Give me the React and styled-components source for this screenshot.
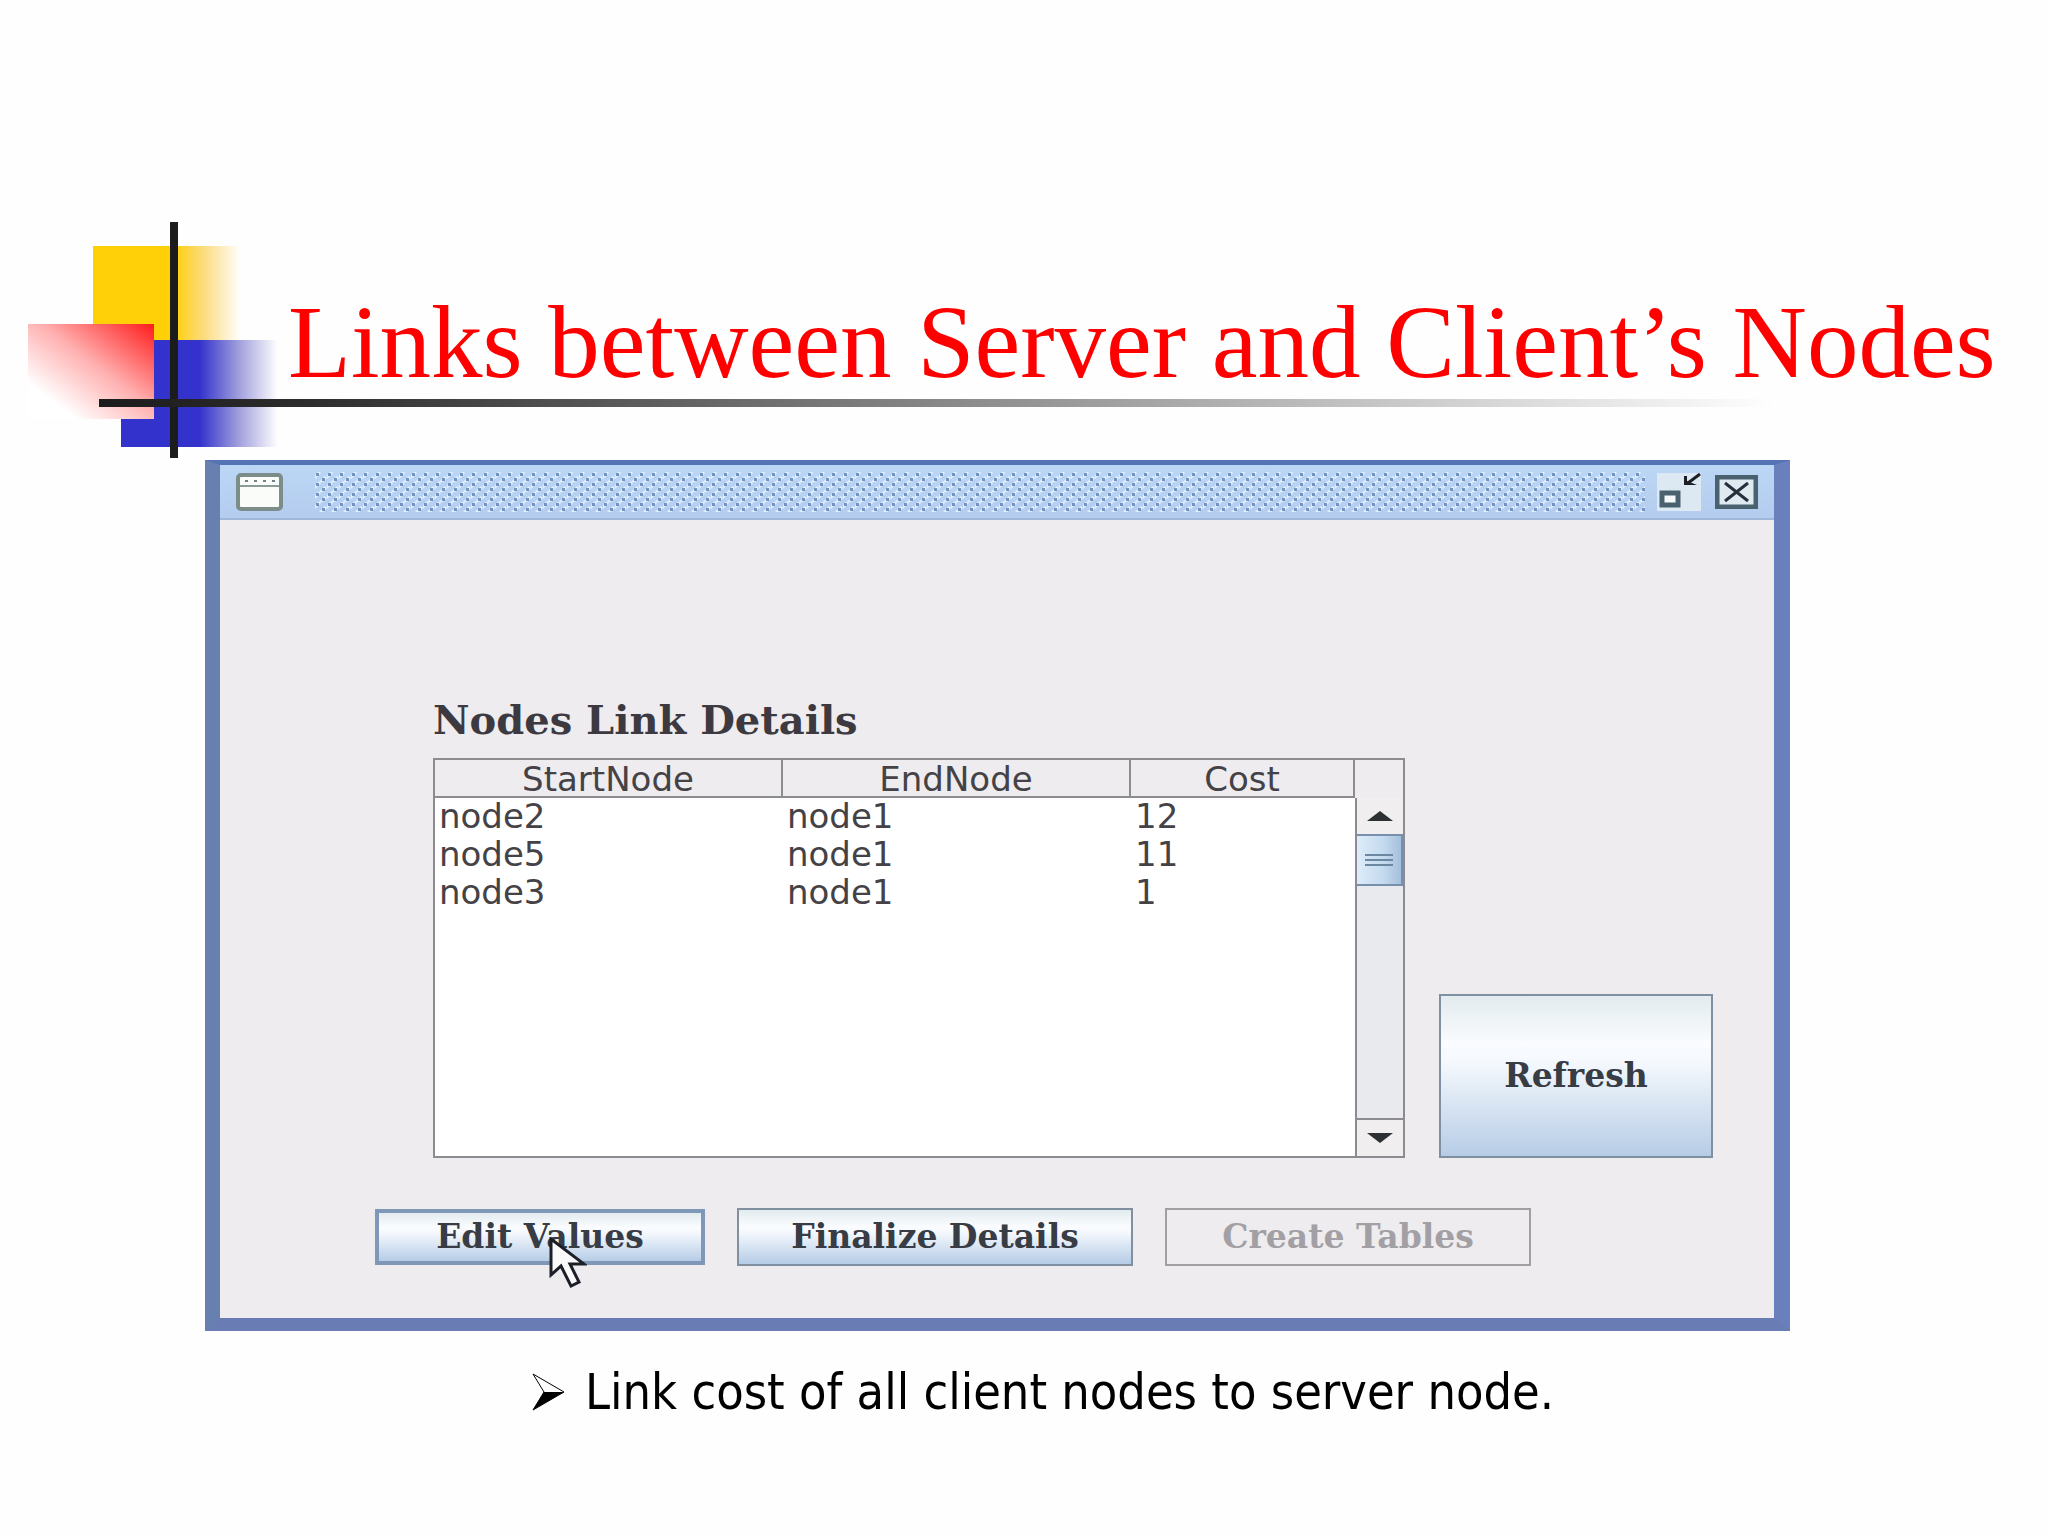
import React from "react";
import styled, { createGlobalStyle } from "styled-components";

const serif = `"DejaVu Serif", serif`;
const sans = `"DejaVu Sans", sans-serif`;

const GlobalStyle = createGlobalStyle`
  *, *::before, *::after { box-sizing: border-box; }
  body { margin: 0; background: #fefefe; }
`;

const Slide = styled.main`
  display: flex;
  flex-direction: column;
  padding-top: 222px;
`;

const Header = styled.header`
  display: grid;
  > * { grid-area: 1 / 1; }
`;

const Ornament = styled.svg`
  display: block;
  width: 100%;
  height: 238px;
`;

const Title = styled.h1`
  margin: 0;
  padding: 64px 0 0 288px;
  font: 400 103px/112px "Liberation Serif", serif;
  color: #ff0000;
  white-space: nowrap;
`;

const Frame = styled.section`
  margin: 0 258px 0 205px;
  border-style: solid;
  border-width: 5px 16px 13px 15px;
  border-color: #5474b4 #6a80bc #6a7cb4 #6880b0;
  background: #eeecee;
`;

const TitleBar = styled.div`
  display: flex;
  align-items: center;
  gap: 12px;
  height: 55px;
  padding: 0 16px;
  background: linear-gradient(#bcd6f6, #b4cdee);
  border-bottom: 2px solid #9db8d8;
`;

const Grip = styled.svg`
  flex: 1;
  height: 40px;
  margin-left: 20px;
`;

const IconButton = styled.button`
  display: block;
  padding: 0;
  border: 0;
  background: none;
  line-height: 0;
`;

const Content = styled.div`
  display: flex;
  flex-direction: column;
  gap: 50px;
  padding: 178px 61px 52px 155px;
`;

const Details = styled.div`
  display: flex;
  align-items: flex-end;
  gap: 34px;
  padding-left: 58px;
`;

const TableBlock = styled.div`
  flex: 1;
  min-width: 0;
`;

const Heading = styled.h2`
  margin: 0 0 16px;
  font: 700 40px/44px ${serif};
  color: #3c3a40;
  white-space: nowrap;
`;

const Panel = styled.div`
  display: flex;
  min-height: 400px;
  border: 2px solid #8c8c90;
  background: #fff;
`;

const TableArea = styled.div`
  flex: 1;
`;

const Table = styled.table`
  width: 100%;
  border-collapse: separate;
  border-spacing: 0;
  table-layout: fixed;
  font: 400 34px/38px ${sans};
  color: #444246;
`;

const HeadCell = styled.th`
  width: ${(p) => p.$width || "auto"};
  padding: 2px 0 0;
  font-weight: 400;
  line-height: 34px;
  background: #eeecee;
  border-right: 2px solid #8c8c90;
  border-bottom: 2px solid #8c8c90;
`;

const Cell = styled.td`
  padding: 0 0 0 4px;
  line-height: 36px;
  padding-bottom: 2px;
`;

const ScrollColumn = styled.div`
  display: flex;
  flex-direction: column;
  width: 48px;
  background: #eeecee;
`;

const Corner = styled.div`
  height: 38px;
`;

const ScrollBar = styled.div`
  flex: 1;
  display: flex;
  flex-direction: column;
  border-left: 2px solid #8c8c90;
  background: #e8eaee;
`;

const ScrollButton = styled.button`
  display: grid;
  place-items: center;
  height: ${(p) => (p.$end ? 38 : 36)}px;
  padding: 0;
  border: 0;
  border-top: ${(p) => (p.$end ? "2px solid #8c8c90" : "0")};
  background: #f0eeee;
`;

const Thumb = styled.div`
  display: grid;
  place-items: center;
  height: 52px;
  border: 2px solid #7890ac;
  border-left: 0;
  background: linear-gradient(90deg, #dcecfa, #c4daee 60%, #a4c0dc);
`;

const Track = styled.div`
  flex: 1;
`;

const SwingButton = styled.button`
  width: ${(p) => p.$width}px;
  height: ${(p) => p.$height}px;
  padding: 0;
  border: ${(p) => (p.$focused ? "4px solid #8098b8" : "2px solid #8090a0")};
  background: linear-gradient(#e2ebee, #fafcff 30%, #f4f8fd 42%, #b6cce6);
  font: 700 33px/36px ${serif};
  color: #383c44;
  white-space: nowrap;
  &:disabled {
    border-color: #a0a0a2;
    background: #eeecee;
    color: #a2a0a4;
  }
`;

const Actions = styled.div`
  display: flex;
  align-items: center;
  gap: 32px;
`;

const Anchor = styled.div`
  position: relative;
  display: flex;
`;

const Pointer = styled.svg`
  position: absolute;
  left: 174px;
  top: 28px;
  pointer-events: none;
`;

const Notes = styled.ul`
  list-style: none;
  margin: 0;
  padding: 29px 0 0 530px;
`;

const Note = styled.li`
  display: flex;
  align-items: center;
  gap: 19px;
  font: 400 50px/64px "DejaVu Sans Condensed", "Noto Sans", sans-serif;
  color: #000;
  white-space: nowrap;
`;

const links = [
  { start: "node2", end: "node1", cost: 12 },
  { start: "node5", end: "node1", cost: 11 },
  { start: "node3", end: "node1", cost: 1 },
];

function SlideOrnament() {
  return (
    <Ornament aria-hidden="true">
      <defs>
        <linearGradient id="yellow">
          <stop offset="0.55" stopColor="#ffcf08" />
          <stop offset="0.75" stopColor="#fbdc80" />
          <stop offset="1" stopColor="#ffffff" />
        </linearGradient>
        <linearGradient id="blue">
          <stop offset="0.5" stopColor="#3432cc" />
          <stop offset="0.75" stopColor="#a09fdc" />
          <stop offset="1" stopColor="#ffffff" />
        </linearGradient>
        <linearGradient id="red" x1="1" y1="0" x2="0.1" y2="0.9">
          <stop offset="0" stopColor="#ff1c1c" />
          <stop offset="0.5" stopColor="#ffb0b0" />
          <stop offset="0.9" stopColor="#ffffff" />
        </linearGradient>
        <linearGradient id="rule">
          <stop offset="0" stopColor="#1c1c1c" />
          <stop offset="0.12" stopColor="#2c2c2c" />
          <stop offset="1" stopColor="#ffffff" />
        </linearGradient>
      </defs>
      <rect x="93" y="24" width="148" height="95" fill="url(#yellow)" />
      <rect x="121" y="118" width="157" height="107" fill="url(#blue)" />
      <rect x="28" y="102" width="126" height="95" fill="url(#red)" />
      <rect x="170" y="0" width="8" height="236" fill="#1c1c1c" />
      <rect x="99" y="177" width="82%" height="8" fill="url(#rule)" />
    </Ornament>
  );
}

export default function App() {
  return (
    <>
      <GlobalStyle />
      <Slide>
        <Header>
          <SlideOrnament />
          <Title>Links between Server and Client’s Nodes</Title>
        </Header>

        <Frame>
          <TitleBar>
            <svg width="47" height="38" aria-hidden="true">
              <rect x="2" y="2" width="43" height="34" rx="3" fill="#fafcfa" stroke="#7c8c88" strokeWidth="4" />
              <path d="M4 13H43" stroke="#8a9a98" strokeWidth="2" />
              <path d="M9 8H41" stroke="#70808c" strokeWidth="2" strokeDasharray="3 6" />
            </svg>
            <Grip aria-hidden="true">
              <defs>
                <pattern id="bumps" width="12" height="10" patternUnits="userSpaceOnUse">
                  <path d="M-1 6L5 0M5 11L11 5" stroke="#e0f0ff" strokeWidth="3" />
                  <rect x="1" y="1" width="3" height="3" fill="#7494c0" />
                  <rect x="7" y="6" width="3" height="3" fill="#7494c0" />
                </pattern>
              </defs>
              <rect width="100%" height="100%" fill="url(#bumps)" />
            </Grip>
            <IconButton type="button" aria-label="Restore">
              <svg width="46" height="38">
                <rect width="44" height="38" fill="#dce8f2" />
                <rect x="5" y="20" width="16" height="12" fill="#f4f8fa" stroke="#4a6270" strokeWidth="5" />
                <path d="M43 1L31 10" stroke="#1c2024" strokeWidth="3" />
                <path d="M27 3H30V8L40 12H27Z" fill="#1c2024" />
              </svg>
            </IconButton>
            <IconButton type="button" aria-label="Close">
              <svg width="43" height="34">
                <rect x="2" y="2" width="39" height="30" fill="#dfe9f0" stroke="#4a6270" strokeWidth="5" />
                <path d="M10 8L33 26M33 8L10 26" stroke="#24303c" strokeWidth="3" />
              </svg>
            </IconButton>
          </TitleBar>

          <Content>
            <Details>
              <TableBlock>
                <Heading>Nodes Link Details</Heading>
                <Panel>
                  <TableArea>
                    <Table>
                      <thead>
                        <tr>
                          <HeadCell $width="348px">StartNode</HeadCell>
                          <HeadCell $width="348px">EndNode</HeadCell>
                          <HeadCell>Cost</HeadCell>
                        </tr>
                      </thead>
                      <tbody>
                        {links.map((l) => (
                          <tr key={l.start}>
                            <Cell>{l.start}</Cell>
                            <Cell>{l.end}</Cell>
                            <Cell>{l.cost}</Cell>
                          </tr>
                        ))}
                      </tbody>
                    </Table>
                  </TableArea>
                  <ScrollColumn>
                    <Corner />
                    <ScrollBar>
                      <ScrollButton type="button" aria-label="Scroll up">
                        <svg width="26" height="10"><path d="M0 10L13 0L26 10Z" fill="#2c3032" /></svg>
                      </ScrollButton>
                      <Thumb>
                        <svg width="28" height="12"><path d="M0 1H28M0 6H28M0 11H28" stroke="#6c88a0" strokeWidth="2" /></svg>
                      </Thumb>
                      <Track />
                      <ScrollButton type="button" aria-label="Scroll down" $end>
                        <svg width="26" height="10"><path d="M0 0L13 10L26 0Z" fill="#2c3032" /></svg>
                      </ScrollButton>
                    </ScrollBar>
                  </ScrollColumn>
                </Panel>
              </TableBlock>
              <SwingButton type="button" $width={274} $height={164}>Refresh</SwingButton>
            </Details>

            <Actions>
              <Anchor>
                <SwingButton type="button" $width={330} $height={56} $focused>Edit Values</SwingButton>
                <Pointer width="38" height="52" aria-hidden="true">
                  <path d="M2 2V38L12 29L22 49L30 45L21 27H35Z" fill="#fafafa" stroke="#1c1e28" strokeWidth="3" />
                </Pointer>
              </Anchor>
              <SwingButton type="button" $width={396} $height={58}>Finalize Details</SwingButton>
              <SwingButton type="button" $width={366} $height={58} disabled>Create Tables</SwingButton>
            </Actions>
          </Content>
        </Frame>

        <Notes>
          <Note>
            <svg width="36" height="38" aria-hidden="true">
              <path d="M3 1L34 19L3 37L14 19Z" fill="none" stroke="#000" strokeWidth="1" />
              <path d="M14 19H34L3 37Z" fill="#000" />
            </svg>
            Link cost of all client nodes to server node.
          </Note>
        </Notes>
      </Slide>
    </>
  );
}
